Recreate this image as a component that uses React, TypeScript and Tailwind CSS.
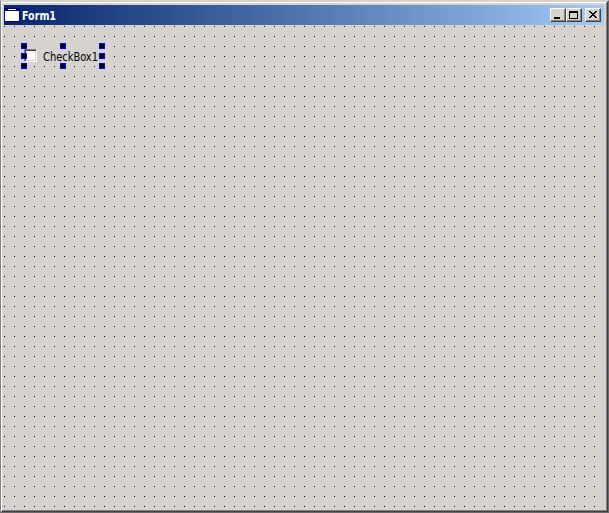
import React from "react";

const handles = [
  "left-[17px] top-[18px]", "left-[56px] top-[18px]", "left-[95px] top-[18px]",
  "left-[17px] top-[28px]", "left-[95px] top-[28px]",
  "left-[17px] top-[38px]", "left-[56px] top-[38px]", "left-[95px] top-[38px]",
];

function CaptionButton({ children }: { children: React.ReactNode }) {
  return (
    <button className="h-[14px] w-4 border border-t-white border-l-white border-r-[#404040] border-b-[#404040] bg-[#d6d3ce] shadow-[inset_-1px_-1px_0_#848284]">
      <svg className="block h-3 w-[14px]" viewBox="0 0 14 12" shapeRendering="crispEdges">{children}</svg>
    </button>
  );
}

function TitleBar() {
  return (
    <header className="flex h-5 items-center bg-linear-to-r from-[#08246b] to-[#a5cbf7] pr-[3px]">
      <svg className="block h-5 w-4 shrink-0" viewBox="0 0 16 20" shapeRendering="crispEdges">
        <path fill="#000084" d="M0 3h16v14H0z" />
        <path fill="#fff" d="M4 4h8v1H4zM1 6h14v10H1z" />
      </svg>
      <svg className="ml-[2px] h-5 w-[60px] shrink-0">
        <text x="0" y="15" textLength="34" lengthAdjust="spacingAndGlyphs" className="fill-white font-['DejaVu_Sans_Condensed','DejaVu_Sans',sans-serif] text-[12px] font-bold">Form1</text>
      </svg>
      <div className="ml-auto flex">
        <CaptionButton><path d="M3 8h6v2H3z" /></CaptionButton>
        <CaptionButton><path d="M2 2h9v8H2zM3 4v5h7V4z" fillRule="evenodd" /></CaptionButton>
        <div className="w-[3px]" />
        <CaptionButton><path d="M3 2h2v1h1v1h2V3h1V2h2v1h-1v1H9v1H8v1h1v1h1v1h1v1H9V8H8V7H6v1H5v1H3V8h1V7h1V6h1V5H5V4H4V3H3z" /></CaptionButton>
      </div>
    </header>
  );
}

export default function App() {
  return (
    <main className="flex h-[513px] w-[609px] flex-col border border-t-[#d6d3ce] border-l-[#848284] border-r-[#6b696b] border-b-[#6b696b] bg-[#d6d3ce]">
      <div className="flex flex-1 flex-col border border-t-[#d6d3ce] border-l-white border-r-[#404040] border-b-[#404040]">
        <div className="flex flex-1 flex-col border-t border-r border-b border-t-white border-r-[#848284] border-b-[#848284] pt-[2px] pr-[2px] pl-[2px]">
          <TitleBar />
          <section className="relative flex-1 overflow-hidden">
            <svg className="absolute top-0 left-0 h-[485px] w-[597px]" shapeRendering="crispEdges">
              <defs><pattern id="grid" width="10" height="10" patternUnits="userSpaceOnUse"><rect x="0" y="1" width="1" height="1" /></pattern></defs>
              <rect width="597" height="485" fill="url(#grid)" />
            </svg>
            <label className="absolute top-[20px] left-[20px] flex h-[21px] w-[79px] items-center bg-[#d6d3ce]">
              <span className="h-[13px] w-[13px] shrink-0 border border-t-[#848284] border-l-[#848284] border-r-white border-b-white bg-white shadow-[inset_1px_1px_0_#404040,inset_-1px_-1px_0_#d6d3ce]" />
              <svg className="ml-[6px] h-[21px] w-[60px] shrink-0 overflow-visible">
                <text x="0" y="16" textLength="55" lengthAdjust="spacingAndGlyphs" className="fill-black font-['DejaVu_Sans_Condensed','DejaVu_Sans',sans-serif] text-[12px]">CheckBox1</text>
              </svg>
            </label>
            {handles.map((place) => (
              <i key={place} className={`absolute h-[6px] w-[6px] border border-[#0000ff] bg-black ${place}`} />
            ))}
          </section>
        </div>
      </div>
    </main>
  );
}
